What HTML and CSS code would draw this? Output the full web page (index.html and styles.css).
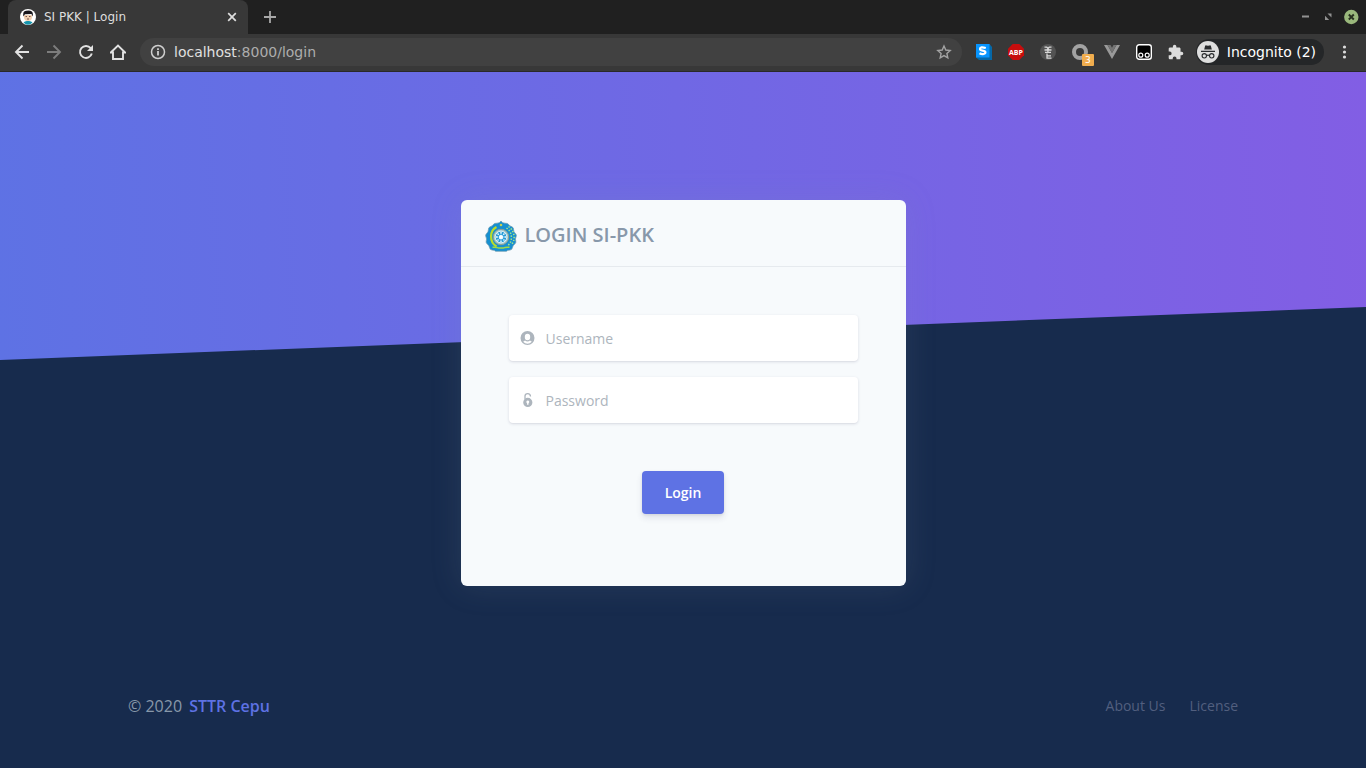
FILE: index.html
```html
<!DOCTYPE html>
<html lang="en">
<head>
<meta charset="utf-8">
<meta name="viewport" content="width=device-width, initial-scale=1">
<title>SI PKK | Login</title>
<link rel="stylesheet" href="styles.css">
</head>
<body>
<header class="browser">
  <div class="tabstrip">
    <div class="tab">
      <svg class="icon16" viewBox="0 0 16 16"><circle cx="8" cy="8" r="8" fill="#fff"/><path d="M3.500 13.500Q5 11.500 8 12q3-.5 4.500 1.500-2 2.300-4.500 2.300t-4.500-2.300Z" fill="#1795ad"/><path d="M4 6h8v2q0 4-4 4T4 8Z" fill="#f0cfb0"/><path d="M3.300 7.500Q2.500 2 6 1.700q6-1.200 6.700 2.300.6 1.500-.2 3.500L11.500 5 5 5.200Z" fill="#17151a"/><path d="M5.500 7.500h1.500m2 0h1.500M7 10h2" stroke="#533" stroke-width=".8"/></svg>
      <span class="tab-title">SI PKK | Login</span>
      <button class="plain" aria-label="Close tab"><svg class="icon10" viewBox="0 0 10 10"><path d="M1.200 1.200l7.600 7.600m0-7.600l-7.600 7.600" stroke="#dedede" stroke-width="1.700"/></svg></button>
    </div>
    <button class="plain new-tab" aria-label="New tab"><svg class="icon12" viewBox="0 0 12 12"><path d="M6 0v12M0 6h12" stroke="#a8a8a8" stroke-width="1.800"/></svg></button>
    <div class="window-controls">
      <button class="plain" aria-label="Minimize"><svg class="icon16" viewBox="0 0 16 16"><path d="M5 7.500h7" stroke="#929292" stroke-width="2"/></svg></button>
      <button class="plain" aria-label="Restore"><svg class="icon16" viewBox="0 0 16 16"><path d="M7.500 4.500h4v4ZM5 6.800V11h4.200Z" fill="#929292"/></svg></button>
      <button class="plain" aria-label="Close window"><svg class="icon16" viewBox="0 0 16 16"><circle cx="8.300" cy="8" r="7.200" fill="#9ab87c"/><path d="M5.800 5.500l5 5m0-5l-5 5" stroke="#293220" stroke-width="1.900"/></svg></button>
    </div>
  </div>
  <nav class="toolbar" aria-label="Browser">
    <div class="nav-buttons">
      <button class="plain" aria-label="Back"><svg class="icon16" viewBox="0 0 16 16"><path d="M15 8H2m6.500-6.500L2 8l6.500 6.500" fill="none" stroke="#e2e2e2" stroke-width="1.900"/></svg></button>
      <button class="plain" aria-label="Forward"><svg class="icon16" viewBox="0 0 16 16"><path d="M1 8h13M7.500 1.500L14 8l-6.500 6.500" fill="none" stroke="#7d7d7d" stroke-width="1.900"/></svg></button>
      <button class="plain" aria-label="Reload"><svg class="icon16" viewBox="0 0 16 16"><path d="M13.800 9.500A6 6 0 1 1 12.700 4.200" fill="none" stroke="#e2e2e2" stroke-width="1.900"/><path d="M15 1v6H9Z" fill="#e2e2e2"/></svg></button>
      <button class="plain" aria-label="Home"><svg class="icon16" viewBox="0 0 16 16"><path d="M0.800 8.500L8 1.500l7.200 7H13V15H3V8.500Z" fill="none" stroke="#e2e2e2" stroke-width="1.900"/></svg></button>
    </div>
    <div class="address">
      <svg class="icon16" viewBox="0 0 16 16"><circle cx="8" cy="8" r="6.500" fill="none" stroke="#cfcfcf" stroke-width="1.500"/><path d="M8 7v4.500M8 4.300v1.600" stroke="#cfcfcf" stroke-width="1.800"/></svg>
      <span class="url"><span class="host">localhost</span>:8000/login</span>
      <button class="plain" aria-label="Bookmark this page"><svg class="icon16" viewBox="0 0 16 16"><path d="M8 2l1.800 4 4.400.5-3.300 3 .9 4.300L8 11.600l-3.800 2.200.9-4.300-3.300-3 4.400-.5Z" fill="none" stroke="#a3a3a3" stroke-width="1.400"/></svg></button>
    </div>
    <div class="extensions">
      <svg class="icon16" viewBox="0 0 16 16"><path d="M0 0h13.500L16 3v13H3L0 13.500Z" fill="#0568a8"/><path d="M0 0h13.500v13.500H0Z" fill="#0795ff"/><path d="M9.800 4Q4 2.200 4 5.100c0 2.200 5.400.8 5.400 3.200 0 2.500-4.400 1.800-5.900 1" fill="none" stroke="#fff" stroke-width="2.200"/></svg>
      <svg class="icon16" viewBox="0 0 16 16"><path d="M4.700 0h6.600L16 4.700v6.600L11.300 16H4.700L0 11.300V4.700Z" fill="#c70d0d"/><text class="abp" x="8" y="11" text-anchor="middle">ABP</text></svg>
      <svg class="icon16" viewBox="0 0 16 16"><circle cx="8" cy="8" r="8" fill="#535353"/><path d="M4.500 3.200h2.300L8 4.400l1.200-1.200h2.300M4.500 6h2.300L8 4.800 9.200 6h2.300M7.900 5v4M5 8.300h6M7 9.500v4.700h4.500M7 11.800h4" fill="none" stroke="#d8d8d8" stroke-width="1.300"/></svg>
      <span class="badge-holder"><svg class="icon16" viewBox="0 0 16 16"><circle cx="8" cy="8" r="6" fill="none" stroke="#a2a2a2" stroke-width="4"/></svg><span class="badge">3</span></span>
      <svg class="icon16" viewBox="0 0 16 16"><path d="M0 1h3.500L8 9l4.500-8H16L8 15Z" fill="#999"/><path d="M3.500 1h3L8 3.800 9.500 1h3L8 9Z" fill="#747474"/></svg>
      <svg class="icon16" viewBox="0 0 16 16"><rect x=".7" y=".7" width="14.600" height="14.600" rx="2.500" fill="#000" stroke="#fff" stroke-width="1.400"/><circle cx="4.800" cy="11.200" r="2" fill="none" stroke="#fff" stroke-width="1.200"/><circle cx="11.200" cy="11.200" r="2" fill="none" stroke="#fff" stroke-width="1.200"/></svg>
      <svg class="icon16" viewBox="1 0 23 23"><path d="M20.500 11H19V7c0-1.100-.9-2-2-2h-4V3.500a2.500 2.500 0 0 0-5 0V5H4c-1.100 0-2 .9-2 2v3.800h1.500a2.700 2.700 0 0 1 0 5.400H2V20c0 1.100.9 2 2 2h3.800v-1.500a2.700 2.700 0 0 1 5.400 0V22H17c1.100 0 2-.9 2-2v-4h1.500a2.500 2.500 0 0 0 0-5Z" fill="#dcdcdc"/></svg>
    </div>
    <button class="profile">
      <svg class="icon22" viewBox="0 0 22 22"><circle cx="11" cy="11" r="11" fill="#dedede"/><path d="M7.200 8.500L8 5.200q.3-1.200 1.500-.8l1.500.4 1.500-.4q1.200-.4 1.500.8l.8 3.300Z" fill="#292b2d"/><path d="M4 10.300h14M9.600 14.500q1.400-.8 2.800 0" fill="none" stroke="#292b2d" stroke-width="1.200"/><circle cx="7.300" cy="14.800" r="2.200" fill="none" stroke="#292b2d" stroke-width="1.100"/><circle cx="14.700" cy="14.800" r="2.200" fill="none" stroke="#292b2d" stroke-width="1.100"/></svg>
      <span>Incognito (2)</span>
    </button>
    <button class="plain" aria-label="Menu"><svg class="icon16" viewBox="0 0 16 16"><g fill="#dcdcdc"><circle cx="8.500" cy="3" r="1.600"/><circle cx="8.500" cy="8" r="1.600"/><circle cx="8.500" cy="13" r="1.600"/></g></svg></button>
  </nav>
</header>

<div class="page">
  <main class="content">
    <section class="card">
      <div class="card-header">
        <svg class="crest" viewBox="0 0 32 32"><path d="M16 1q1.500 2.300 4 2.200 2.500-.2 3.700 1.300 1 1.700 3.300 2.300 1.700.8 1.600 3 0 2.300 1.800 3.700 1.600 1.500.6 3.500-1 2-.2 4 .5 2-1.300 3.300-1.800 1.200-2 3.300-.3 2.200-2.600 2.500-2.500 0-3.500 1.200H10.600q-1-1.200-3.500-1.200-2.300-.3-2.600-2.500-.2-2.100-2-3.300Q.7 23 1.200 21q.8-2-.2-4t.6-3.500Q3.400 12.100 3.400 9.800q-.1-2.200 1.600-3 2.300-.6 3.300-2.300Q9.500 3 12 3.200 14.500 3.300 16 1Z" fill="#168fd0" stroke="#6b9aae" stroke-width=".7"/><path d="M11.500 7C4.500 10.500 4 22 11.500 26.500" fill="none" stroke="#b9dc2a" stroke-width="2.200"/><path d="M7.500 27.300q4.500-.3 6 .7h5q1.500-1 6-.7" fill="none" stroke="#9edb45" stroke-width="1.400"/><g fill="none" stroke="#a9e886" stroke-width="1.500" stroke-dasharray="1.400 1.600"><path d="M21.500 8c6 4 6.500 13 1.500 17.500"/><path d="M23.500 6.500c7 5 7 14.500 2.500 18.500"/></g><circle cx="16" cy="5" r="1.300" fill="#c7ce50"/><circle cx="16" cy="17" r="7.700" fill="#a9cfd8" stroke="#8fa08e" stroke-width="1"/><circle cx="16" cy="17" r="5.800" fill="#259bd8" stroke="#e5f4f5" stroke-width=".9"/><path d="M16 12v10M11 17h10M12.500 13.500l7 7m0-7l-7 7" stroke="#e9faff" stroke-width="1.400" stroke-dasharray="1.800 1"/><circle cx="16" cy="17" r="1.500" fill="#fff"/></svg>
        <h1 class="card-title">LOGIN SI-PKK</h1>
      </div>
      <form class="card-body">
        <div class="field">
          <label for="username"><svg class="icon16" viewBox="0 0 16 16" role="img" aria-label="Username"><path fill-rule="evenodd" d="M7.500 1a7 7 0 1 1 0 14 7 7 0 0 1 0-14Zm0 2.800a2.700 3.200 0 1 0 0 6.400 2.700 3.200 0 0 0 0-6.400ZM3.200 11.700q1.800 2 4.300 2t4.300-2L10 10.500q-2.500 2-5 0Z" fill="#adb5bd"/></svg></label>
          <input id="username" type="text" placeholder="Username">
        </div>
        <div class="field">
          <label for="password"><svg class="icon16" viewBox="0 0 16 16" role="img" aria-label="Password"><path d="M5 7.500V4Q5 1.600 7.700 1.600T10.500 4.500" fill="none" stroke="#adb5bd" stroke-width="1.300"/><path fill-rule="evenodd" d="M7.800 5.800a4.600 4.600 0 1 1 0 9.200 4.600 4.600 0 0 1 0-9.200Zm0 2.600a1.500 1.500 0 0 0-.7 2.800v1.600h1.400v-1.600a1.500 1.500 0 0 0-.7-2.800Z" fill="#adb5bd"/></svg></label>
          <input id="password" type="password" placeholder="Password">
        </div>
        <button class="submit" type="button">Login</button>
      </form>
    </section>
  </main>
  <footer class="footer">
    <div class="copyright">© 2020 <a class="brand" href="#">STTR Cepu</a></div>
    <nav class="footer-links" aria-label="Footer">
      <a href="#">About Us</a>
      <a href="#">License</a>
    </nav>
  </footer>
</div>
</body>
</html>
```
FILE: styles.css
```css
* { box-sizing: border-box; }

body {
  margin: 0;
  min-height: 100vh;
  display: flex;
  flex-direction: column;
  font-family: "Open Sans", "Noto Sans", sans-serif;
  background: #172b4d;
}

svg { display: block; flex: none; }
a { text-decoration: none; }
.icon10 { width: 10px; height: 10px; }
.icon12 { width: 12px; height: 12px; }
.icon16 { width: 16px; height: 16px; }
.icon22 { width: 22px; height: 22px; }

.plain {
  display: block;
  padding: 0;
  border: 0;
  background: none;
}

/* Browser frame */
.browser {
  font-family: "DejaVu Sans", sans-serif;
  background: #383838;
  border-bottom: 1px solid #292929;
}

.tabstrip {
  display: flex;
  align-items: center;
  height: 34px;
  padding: 0 7px 0 8px;
  background: #202020;
}

.tab {
  display: flex;
  align-items: center;
  gap: 8px;
  width: 240px;
  height: 34px;
  padding: 0 11px 0 12px;
  border-radius: 8px 8px 0 0;
  background: #383838;
}

.tab-title { flex: 1; font-size: 12px; color: #dedede; }
.new-tab { margin-left: 16px; }

.window-controls {
  display: flex;
  gap: 7px;
  margin-left: auto;
}

.toolbar {
  display: flex;
  align-items: center;
  height: 37px;
  padding: 0 14px 1px;
}

.nav-buttons { display: flex; gap: 16px; }

.address {
  flex: 1;
  display: flex;
  align-items: center;
  gap: 8px;
  height: 28px;
  margin-left: 14px;
  padding: 0 10px;
  border-radius: 14px;
  background: #414141;
}

.url { flex: 1; font-size: 14px; color: #adadad; }
.host { color: #e0e0e0; }

.extensions {
  display: flex;
  gap: 16px;
  margin: 0 12px 0 14px;
}

.abp {
  font: bold 7px "Open Sans", sans-serif;
  fill: #fff;
}

.badge-holder { position: relative; }

.badge {
  position: absolute;
  top: 10px;
  left: 10px;
  width: 12px;
  height: 12px;
  border-radius: 1px;
  background: #f0ad4e;
  color: #fff;
  font-size: 9px;
  line-height: 12px;
  text-align: center;
}

.profile {
  display: flex;
  align-items: center;
  gap: 8px;
  height: 26px;
  margin-right: 12px;
  padding: 0 8px 0 1px;
  border: 0;
  border-radius: 13px;
  background: #242628;
  color: #fff;
  font: 14px "DejaVu Sans", sans-serif;
}

/* Login page */
.page {
  position: relative;
  z-index: 0;
  flex: 1;
  display: flex;
  flex-direction: column;
  justify-content: space-between;
}

.page::before {
  content: "";
  position: absolute;
  z-index: -1;
  inset: 0 0 auto;
  height: 288px;
  background: linear-gradient(87deg, #5e72e4, #825ee4);
  clip-path: polygon(0 0, 100% 0, 100% 235px, 0 100%);
}

.content { padding: 128px 15px 0; }

.card {
  max-width: 445px;
  margin: 0 auto;
  border-radius: 6px;
  background: #f7fafc;
  box-shadow: 0 0 32px rgba(136, 152, 170, 0.15);
}

.card-header {
  display: flex;
  align-items: flex-start;
  gap: 8px;
  padding: 20px 24px 14px;
  border-bottom: 1px solid #e6eaee;
}

.crest { width: 32px; height: 32px; }

.card-title {
  margin: 0;
  font-size: 20px;
  font-weight: 600;
  line-height: 30px;
  color: #8898aa;
}

.card-body {
  display: flex;
  flex-direction: column;
  gap: 16px;
  padding: 48px 48px 72px;
}

.field {
  display: flex;
  align-items: center;
  height: 46px;
  padding-left: 11px;
  border-radius: 4px;
  background: #fff;
  box-shadow: 0 1px 3px rgba(50, 50, 93, 0.15), 0 1px 0 rgba(0, 0, 0, 0.02);
}

.field input {
  flex: 1;
  min-width: 0;
  height: 46px;
  padding: 0 10px;
  border: 0;
  background: none;
  font: 14px "Open Sans", sans-serif;
  color: #8898aa;
}

.field input::placeholder { color: #adb5bd; }

.submit {
  align-self: center;
  margin-top: 32px;
  padding: 0 23px;
  border: 0;
  border-radius: 4px;
  background: #5e72e4;
  color: #fff;
  font: 600 14px/43px "Open Sans", sans-serif;
  box-shadow: 0 4px 6px rgba(50, 50, 93, 0.11), 0 1px 3px rgba(0, 0, 0, 0.08);
}

.footer {
  display: flex;
  align-items: center;
  justify-content: space-between;
  width: 100%;
  max-width: 1140px;
  margin: 0 auto;
  padding: 40px 15px 50px;
}

.copyright {
  font-size: 16px;
  line-height: 24px;
  color: #8898aa;
}

.brand {
  margin-left: 3px;
  font-weight: 600;
  color: #5e72e4;
}

.footer-links { display: flex; gap: 24px; }

.footer-links a {
  font-size: 14px;
  line-height: 24px;
  color: #525f7f;
}
```
